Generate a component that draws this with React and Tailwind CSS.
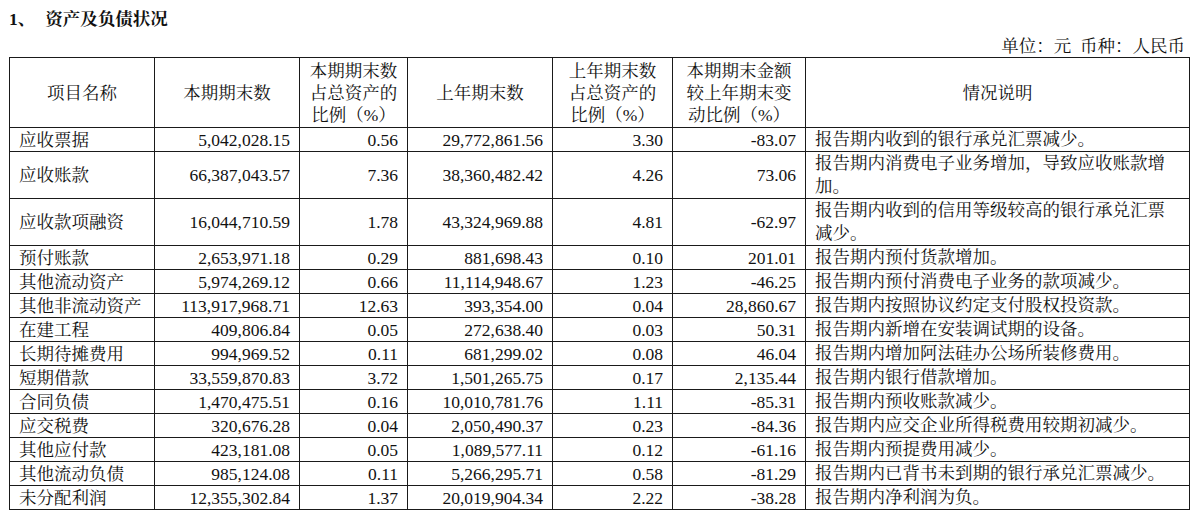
import React from 'react';

const rows = [
  ['应收票据', '5,042,028.15', '0.56', '29,772,861.56', '3.30', '-83.07', ['报告期内收到的银行承兑汇票减少。']],
  ['应收账款', '66,387,043.57', '7.36', '38,360,482.42', '4.26', '73.06', ['报告期内消费电子业务增加，导致应收账款增', '加。']],
  ['应收款项融资', '16,044,710.59', '1.78', '43,324,969.88', '4.81', '-62.97', ['报告期内收到的信用等级较高的银行承兑汇票', '减少。']],
  ['预付账款', '2,653,971.18', '0.29', '881,698.43', '0.10', '201.01', ['报告期内预付货款增加。']],
  ['其他流动资产', '5,974,269.12', '0.66', '11,114,948.67', '1.23', '-46.25', ['报告期内预付消费电子业务的款项减少。']],
  ['其他非流动资产', '113,917,968.71', '12.63', '393,354.00', '0.04', '28,860.67', ['报告期内按照协议约定支付股权投资款。']],
  ['在建工程', '409,806.84', '0.05', '272,638.40', '0.03', '50.31', ['报告期内新增在安装调试期的设备。']],
  ['长期待摊费用', '994,969.52', '0.11', '681,299.02', '0.08', '46.04', ['报告期内增加阿法硅办公场所装修费用。']],
  ['短期借款', '33,559,870.83', '3.72', '1,501,265.75', '0.17', '2,135.44', ['报告期内银行借款增加。']],
  ['合同负债', '1,470,475.51', '0.16', '10,010,781.76', '1.11', '-85.31', ['报告期内预收账款减少。']],
  ['应交税费', '320,676.28', '0.04', '2,050,490.37', '0.23', '-84.36', ['报告期内应交企业所得税费用较期初减少。']],
  ['其他应付款', '423,181.08', '0.05', '1,089,577.11', '0.12', '-61.16', ['报告期内预提费用减少。']],
  ['其他流动负债', '985,124.08', '0.11', '5,266,295.71', '0.58', '-81.29', ['报告期内已背书未到期的银行承兑汇票减少。']],
  ['未分配利润', '12,355,302.84', '1.37', '20,019,904.34', '2.22', '-38.28', ['报告期内净利润为负。']],
];

const headers = [
  ['项目名称'],
  ['本期期末数'],
  ['本期期末数', '占总资产的', '比例（%）'],
  ['上年期末数'],
  ['上年期末数', '占总资产的', '比例（%）'],
  ['本期期末金额', '较上年期末变', '动比例（%）'],
  ['情况说明'],
];

const widths = ['w-[145px]', 'w-[145px]', 'w-[108px]', 'w-[145px]', 'w-[120px]', 'w-[133px]', 'w-[384px]'];

const cell = 'border border-[#1a1a1a] p-0 align-middle';

function App() {
  return (
    <div
      className="w-[1196px] h-[516px] bg-white text-[#111] px-[9px] overflow-hidden"
      style={{ fontFamily: '"Liberation Serif", "Noto Serif CJK SC", "Noto Sans CJK SC", serif' }}
    >
      <div className="pt-[8px] text-[17.5px] leading-[22px] font-bold">
        <span className="mr-[10px]">1、</span>资产及负债状况
      </div>
      <div className="mt-[5px] text-[17.5px] leading-[22px] text-right pr-[2px]">
        单位：元&nbsp;&nbsp;币种：人民币
      </div>

      <table className="w-[1180px] table-fixed border-collapse text-[17.5px]">
        <colgroup>
          {widths.map((w, i) => (
            <col key={i} className={w} />
          ))}
        </colgroup>
        <thead>
          <tr className="h-[70px]">
            {headers.map((h, i) => (
              <th key={i} className={`${cell} font-normal text-center leading-[22px]`}>
                {h.map((line, j) => (
                  <div key={j}>{line}</div>
                ))}
              </th>
            ))}
          </tr>
        </thead>
        <tbody>
          {rows.map((r, i) => {
            const tall = r[6].length > 1;
            return (
              <tr key={i} className={tall ? 'h-[47px]' : 'h-[24px]'}>
                <td className={`${cell} pl-[9px] leading-[22px] whitespace-nowrap`}>{r[0]}</td>
                {r.slice(1, 6).map((v, j) => (
                  <td key={j} className={`${cell} pr-[9px] text-right leading-[22px]`}>
                    {v}
                  </td>
                ))}
                <td className={`${cell} pl-[9px] leading-[23px] whitespace-nowrap`}>
                  {r[6].map((line, j) => (
                    <div key={j}>{line}</div>
                  ))}
                </td>
              </tr>
            );
          })}
        </tbody>
      </table>
    </div>
  );
}

export default App;
